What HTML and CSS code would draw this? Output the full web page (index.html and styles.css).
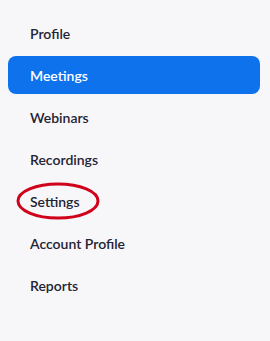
FILE: index.html
```html
<!DOCTYPE html>
<html lang="en">
<head>
<meta charset="UTF-8">
<meta name="viewport" content="width=device-width, initial-scale=1.0">
<title>Account navigation</title>
<link rel="stylesheet" href="styles.css">
</head>
<body>
<nav class="side-nav">
<a class="nav-item" href="#">Profile</a>
<a class="nav-item active" href="#">Meetings</a>
<a class="nav-item" href="#">Webinars</a>
<a class="nav-item" href="#">Recordings</a>
<a class="nav-item marked" href="#">Settings
<svg class="circle" width="84" height="38" viewBox="0 0 84 38"><ellipse cx="42" cy="19" rx="40" ry="17" fill="none" stroke="#d0021b" stroke-width="3"/></svg>
</a>
<a class="nav-item" href="#">Account Profile</a>
<a class="nav-item" href="#">Reports</a>
</nav>
</body>
</html>
```

FILE: styles.css
```css
html, body {
    margin: 0;
    background: #f7f7fa;
}

.side-nav {
    display: flex;
    flex-direction: column;
    gap: 4px;
    padding: 14px 10px 0 8px;
}

.nav-item {
    position: relative;
    display: flex;
    align-items: center;
    height: 38px;
    padding-left: 22px;
    border-radius: 8px;
    font-family: Lato, "Noto Sans", sans-serif;
    font-size: 14px;
    font-weight: 600;
    color: #232333;
    text-decoration: none;
}

.nav-item.active {
    background: #0e72ed;
    color: #fff;
}

.circle {
    position: absolute;
    left: 8px;
    top: 0;
}
```
